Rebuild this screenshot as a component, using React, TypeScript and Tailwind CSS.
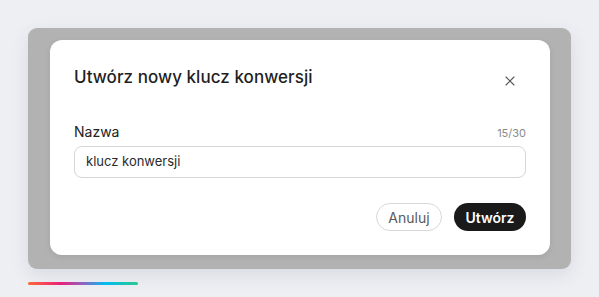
import { X } from "lucide-react";

export default function App() {
  return (
    <div className="min-h-[297px] w-full bg-[#eeeff3] pt-[28px] pl-[28px] pr-[28px] font-['Inter',sans-serif]">
      {/* Overlay panel */}
      <div className="w-[543px] rounded-[9px] bg-[#b2b2b2] pt-[12px] pb-[14px] pl-[22px] pr-[21px] shadow-[0_6px_18px_rgba(60,70,110,0.12)]">
        {/* Dialog */}
        <div className="w-[500px] rounded-[12px] bg-white px-[24px] pt-[25px] pb-[24px] shadow-[0_2px_6px_rgba(0,0,0,0.08)]">
          <div className="flex items-start justify-between">
            <h2 className="text-[17px] leading-[24px] font-medium text-[#1f1f1f] tracking-[0.05px]">
              Utwórz nowy klucz konwersji
            </h2>
            <button
              className="mt-[4px] mr-[4px] flex size-[24px] items-center justify-center text-[#555]"
              aria-label="Zamknij"
            >
              <X size={16} strokeWidth={1.6} />
            </button>
          </div>

          <div className="mt-[29px] flex items-baseline justify-between">
            <label className="text-[14px] leading-[20px] text-[#222]">Nazwa</label>
            <span className="text-[11px] text-[#8a8a8a]">15/30</span>
          </div>

          <div className="mt-[4px] flex h-[32px] items-center rounded-[8px] border border-[#d6d6d6] px-[11px] text-[13px] text-[#2a2a2a]">
            klucz konwersji
          </div>

          <div className="mt-[25px] flex justify-end gap-[12px]">
            <button className="h-[28px] w-[66px] rounded-full border border-[#d8d8d8] text-[14px] text-[#5a5a5a]">
              Anuluj
            </button>
            <button className="h-[28px] w-[72px] rounded-full bg-[#1a1a1a] text-[14px] font-semibold text-white">
              Utwórz
            </button>
          </div>
        </div>
      </div>

      {/* Gradient bar */}
      <div className="mt-[13px] h-[3px] w-[110px] rounded-full bg-[linear-gradient(90deg,#ff6a3a_0%,#e8207a_30%,#8e63c0_50%,#00bcf2_70%,#2dc98c_100%)]" />
    </div>
  );
}
